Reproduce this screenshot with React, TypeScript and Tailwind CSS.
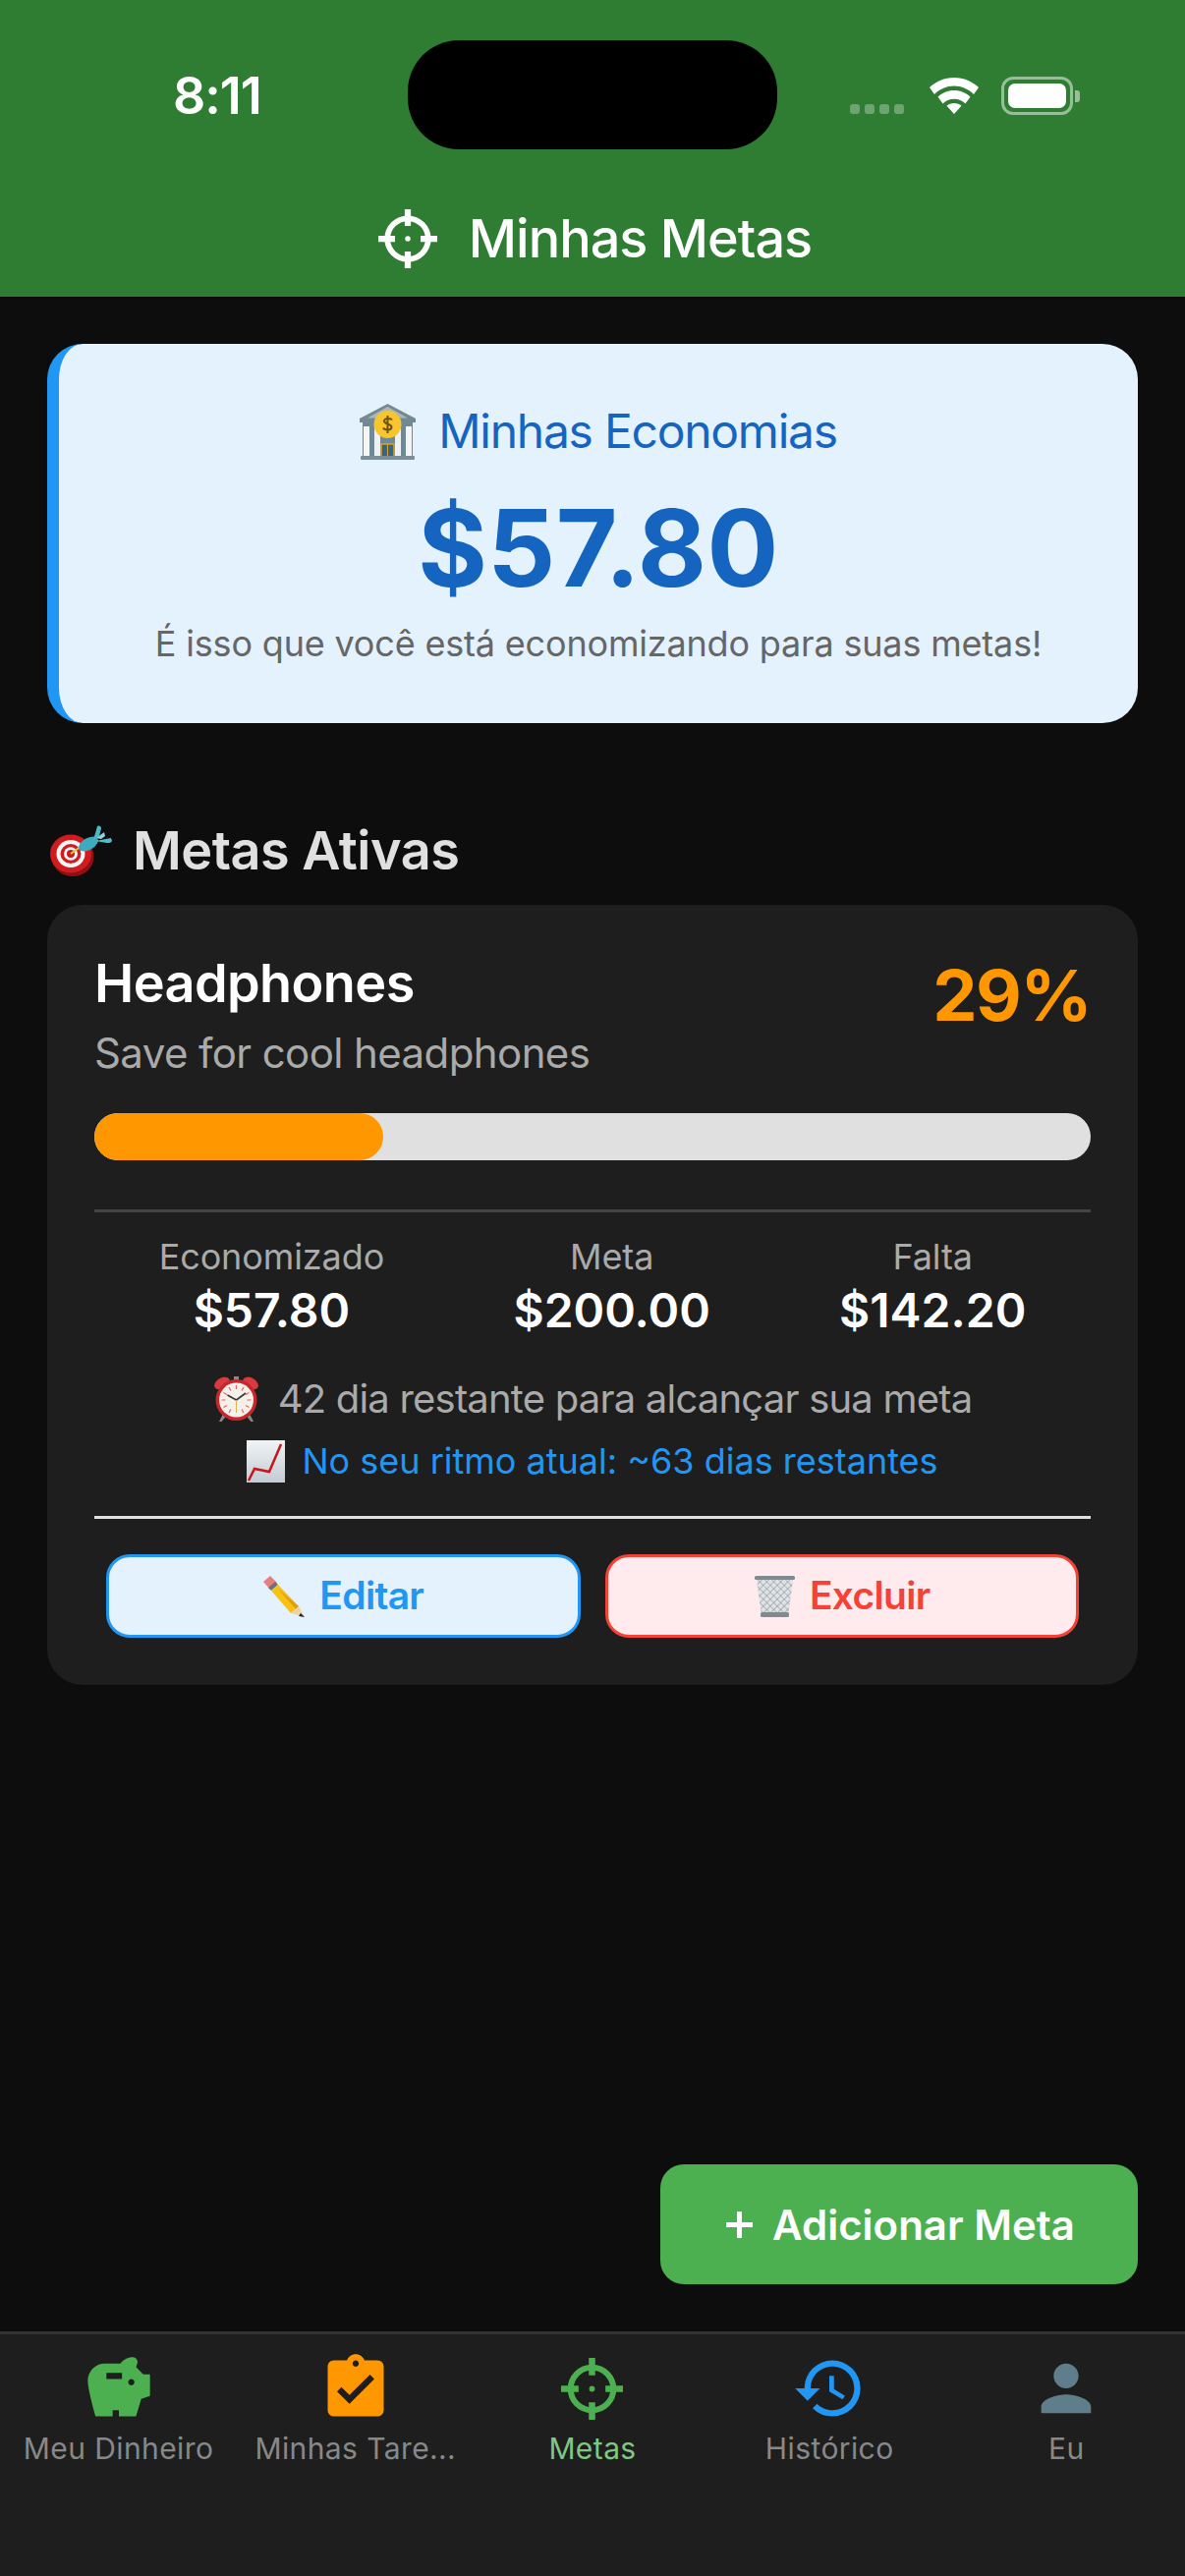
import { MdAssignmentTurnedIn, MdHistory, MdPerson, MdSavings } from "react-icons/md";

const font = { fontFamily: "Inter, 'Noto Sans', sans-serif" };

function Crosshair({ size, color }: { size: number; color: string }) {
  return (
    <svg viewBox="0 0 24 24" width={size} height={size} fill="none" stroke={color}>
      <circle cx="12" cy="12" r="8.3" strokeWidth="2.3" />
      <path d="M12 0v6.800M12 17.200V24M0 12h6.800M17.200 12H24" strokeWidth="2.5" />
      <circle cx="12" cy="12" r="1.100" fill={color} stroke="none" />
    </svg>
  );
}

function BankEmoji({ className }: { className?: string }) {
  return (
    <svg viewBox="0 0 57 57" className={className}>
      <path d="M28.500 0 57 15v4H0v-4z" fill="#76898f" />
      <path d="M28.500 3 49 14.500H8z" fill="#a9b8bd" />
      <rect x="3" y="19" width="51" height="34" fill="#6f8a94" />
      <rect x="4" y="23" width="6" height="30" fill="#f4f5f5" />
      <rect x="15" y="23" width="6" height="30" fill="#eef0f1" />
      <rect x="36" y="23" width="6" height="30" fill="#eef0f1" />
      <rect x="47" y="23" width="6" height="30" fill="#f4f5f5" />
      <rect x="22" y="41" width="13" height="13" fill="#37648a" stroke="#d9a520" strokeWidth="1.500" />
      <path d="M28.500 41v13" stroke="#d9a520" strokeWidth="1" />
      <rect x="1" y="53" width="55" height="4" rx="1" fill="#7d8f96" />
      <circle cx="28.500" cy="21" r="14" fill="#f8c62c" />
      <path d="M33 16.500c-1-1.500-7-2.500-8 .8s8 3 7.500 6.700-7.500 2.500-8.500.5M28.500 12v18" fill="none" stroke="#6f5316" strokeWidth="2" />
    </svg>
  );
}

function DartEmoji({ className }: { className?: string }) {
  return (
    <svg viewBox="0 0 63 53" className={className}>
      <ellipse cx="23" cy="33" rx="21.500" ry="20" fill="#8d1113" />
      <ellipse cx="21" cy="30" rx="21" ry="19.500" fill="#d01c1f" />
      <ellipse cx="21" cy="30" rx="14.500" ry="14" fill="#f5f5f5" />
      <ellipse cx="21" cy="30" rx="10.500" ry="10" fill="#d01c1f" />
      <ellipse cx="21" cy="30" rx="7" ry="6.700" fill="#f5f5f5" />
      <ellipse cx="21" cy="30" rx="4" ry="4" fill="#c81b1e" />
      <path d="m21 30 11-8" stroke="#e8c23a" strokeWidth="2" />
      <ellipse cx="39" cy="20" rx="11" ry="6" fill="#3fa9bd" transform="rotate(-30 39 20)" />
      <path d="M44 16 48 2c2-1 4 0 4 2l-2 8z" fill="#4eb7c8" />
      <path d="m47 14 8-6 1 4-4 3z" fill="#8fd3dc" />
      <path d="m46 17 16-3 1 3c-1 2-3 2-5 2z" fill="#52bccb" />
    </svg>
  );
}

function AlarmEmoji({ className }: { className?: string }) {
  return (
    <svg viewBox="0 0 47 47" className={className}>
      <path d="m10 38-4 8h2.500l5-6zM37 38l4 8h-2.500l-5-6z" fill="#8a8a8a" />
      <rect x="21" y="0" width="5" height="4" fill="#8a8a8a" />
      <ellipse cx="9" cy="7" rx="8.500" ry="5.500" fill="#d83a3f" transform="rotate(-30 9 7)" />
      <ellipse cx="38" cy="7" rx="8.500" ry="5.500" fill="#d83a3f" transform="rotate(30 38 7)" />
      <circle cx="23.500" cy="24" r="21" fill="#c5272d" />
      <circle cx="23.500" cy="24" r="17.500" fill="#f5f1ea" />
      <path d="M23.500 9v4M31 11l-2 3.500M36.500 16.500 33 18.500M38.500 24h-4M36.500 31.500 33 29.500M31 37l-2-3.500M16 11l2 3.500M10.500 16.500l3.500 2M8.500 24h4M10.500 31.500l3.500-2M16 37l2-3.500" stroke="#e0646a" strokeWidth="1.200" />
      <path d="M23.500 24 14.500 19M23.500 24 33 17" stroke="#3a3a3a" strokeWidth="1.700" />
      <path d="M23.500 24v13" stroke="#d9b44a" strokeWidth="1" />
    </svg>
  );
}

function ChartEmoji({ className }: { className?: string }) {
  return (
    <svg viewBox="0 0 39 43" className={className}>
      <defs>
        <linearGradient id="chart-bg" x1="0" y1="0" x2="0" y2="1">
          <stop offset="0" stopColor="#f1f4f6" />
          <stop offset="1" stopColor="#c3ccd3" />
        </linearGradient>
      </defs>
      <rect width="39" height="43" fill="url(#chart-bg)" />
      <path d="m2 41 6-12 15 3L35 4" fill="none" stroke="#c4161c" strokeWidth="2.500" />
    </svg>
  );
}

function PencilEmoji({ className }: { className?: string }) {
  return (
    <svg viewBox="0 0 44 43" className={className}>
      <path d="M1 7 8 1l7 7-7 7z" fill="#e77f82" />
      <path d="m6 13 7-6 3 3-7 6z" fill="#6f7479" />
      <path d="m9 16 7-6 21 22-8 7z" fill="#f7c313" />
      <path d="m16 14 21 18-3 3z" fill="#e39d0c" />
      <path d="m29 39 8-7 6 11z" fill="#ecd3a4" />
      <path d="m39 39 4 4-6-1z" fill="#222" />
    </svg>
  );
}

function TrashEmoji({ className }: { className?: string }) {
  return (
    <svg viewBox="0 0 43 43" className={className}>
      <defs>
        <pattern id="trash-mesh" width="5" height="5" patternUnits="userSpaceOnUse" patternTransform="rotate(45)">
          <path d="M0 0h5v5" fill="none" stroke="#838d93" strokeWidth="1.100" />
        </pattern>
      </defs>
      <path d="M3 5h37l-5 37H8z" fill="#dfe3e5" />
      <path d="M3 5h37l-5 37H8z" fill="url(#trash-mesh)" />
      <rect x="1" y="1" width="41" height="4" rx="1.500" fill="#7f8a90" />
      <rect x="7" y="38" width="29" height="5" rx="1.500" fill="#7f8b91" />
    </svg>
  );
}

function Stat({ label, value }: { label: string; value: string }) {
  return (
    <div className="flex flex-col items-center">
      <span className="text-[36px] leading-[50px] tracking-[-0.1px] text-[#aaaaaa]">{label}</span>
      <span className="text-[48px] leading-[60px] font-semibold text-white">{value}</span>
    </div>
  );
}

const tabs = [
  { label: "Meu Dinheiro", icon: <MdSavings size={76} color="#4caf50" />, text: "text-[#888888]" },
  { label: "Minhas Tare...", icon: <MdAssignmentTurnedIn size={76} color="#ff9800" />, text: "text-[#888888]" },
  { label: "Metas", icon: <Crosshair size={63} color="#4caf50" />, text: "text-[#81c784]" },
  { label: "Histórico", icon: <MdHistory size={76} color="#2196f3" />, text: "text-[#888888]" },
  { label: "Eu", icon: <MdPerson size={76} color="#607d8b" />, text: "text-[#888888]" },
];

export default function App() {
  return (
    <div className="flex h-[2622px] w-[1206px] flex-col overflow-hidden bg-[#0d0d0d]" style={font}>
      <header className="h-[302px] bg-[#2e7d32] text-white">
        <div className="grid grid-cols-[415px_376px_1fr] pt-[41px]">
          <div className="pt-[31px] pl-[176px] text-[52px] leading-[52px] font-semibold tracking-[-1px]">8:11</div>
          <div className="h-[111px] rounded-[52px] bg-black" />
          <div className="flex items-start pt-[38px] pl-[74px]">
            <div className="mt-[27px] flex gap-[5px]">
              <span className="h-[10px] w-[10px] rounded-[3px] bg-white/30" />
              <span className="h-[10px] w-[10px] rounded-[3px] bg-white/30" />
              <span className="h-[10px] w-[10px] rounded-[3px] bg-white/30" />
              <span className="h-[10px] w-[10px] rounded-[3px] bg-white/30" />
            </div>
            <svg viewBox="0 0 50 37" className="ml-[26px] h-[37px] w-[50px]" fill="#fff">
              <path d="M25 0c10 0 18.500 4 25 10l-5 7C39.500 11.500 32.500 8.500 25 8.500S10.500 11.500 5 17l-5-7C6.500 4 15 0 25 0z" />
              <path d="M25 13c6.500 0 12 2.500 16.500 6.500l-5 7c-3-3-7-4.800-11.500-4.800s-8.500 1.800-11.500 4.800l-5-7C13 15.500 18.500 13 25 13z" />
              <path d="M25 26c3 0 5.500 1 7.500 2.800L25 37l-7.500-8.200C19.500 27 22 26 25 26z" />
            </svg>
            <div className="mt-[-1px] ml-[23px] flex items-center">
              <div className="flex h-[39px] w-[73px] items-stretch rounded-[12px] border-[3px] border-white/50 p-[4px]">
                <div className="w-full rounded-[7px] bg-white" />
              </div>
              <div className="ml-[2px] h-[12px] w-[5px] rounded-r-[3px] bg-white/50" />
            </div>
          </div>
        </div>
        <div className="mt-[61px] flex items-center justify-center gap-[32px] pl-[5px]">
          <Crosshair size={60} color="#fff" />
          <h1 className="text-[54px] leading-[60px] font-medium tracking-[-1px]">Minhas Metas</h1>
        </div>
      </header>

      <main className="flex flex-1 flex-col px-[48px] pt-[48px] pb-[48px]">
        <section className="flex h-[386px] flex-col items-center rounded-[36px] border-l-[12px] border-[#2196f3] bg-[#e3f2fd] pt-[60px]">
          <div className="flex items-center gap-[23px] text-[#1565c0]">
            <BankEmoji className="h-[57px] w-[57px]" />
            <span className="text-[48px] leading-[58px] tracking-[-1.25px]">Minhas Economias</span>
          </div>
          <div className="mt-[25px] text-[108px] leading-[130px] font-bold tracking-[0.4px] text-[#1565c0]">$57.80</div>
          <p className="mt-[7px] text-[36px] leading-[50px] tracking-[-0.18px] text-[#666666]">É isso que você está economizando para suas metas!</p>
        </section>

        <h2 className="mt-[99px] flex h-[60px] items-center gap-[21px] pl-[3px] text-[54px] font-semibold tracking-[-0.5px] text-[#e0e0e0]">
          <DartEmoji className="h-[53px] w-[63px]" />
          Metas Ativas
        </h2>

        <section className="mt-[26px] h-[794px] rounded-[36px] bg-[#1e1e1e] px-[48px] pt-[48px]">
          <div className="flex items-start justify-between">
            <div>
              <div className="text-[54px] leading-[64px] font-semibold tracking-[-0.6px] text-white">Headphones</div>
              <div className="mt-[14px] text-[42px] leading-[50px] tracking-[-0.6px] text-[#aaaaaa]">Save for cool headphones</div>
            </div>
            <div className="text-[72px] leading-[88px] font-bold tracking-[-1.5px] text-[#ff9800]">29%</div>
          </div>
          <div className="mt-[36px] h-[48px] overflow-hidden rounded-full bg-[#e0e0e0]">
            <div className="h-full rounded-full bg-[#ff9800]" style={{ width: "29%" }} />
          </div>
          <div className="mt-[50px] flex justify-around border-t-[3px] border-[#444444] pt-[20px]">
            <Stat label="Economizado" value="$57.80" />
            <Stat label="Meta" value="$200.00" />
            <Stat label="Falta" value="$142.20" />
          </div>
          <div className="mt-[35px] flex items-center justify-center gap-[19px] text-[40px] leading-[50px] tracking-[-0.8px] text-[#aaaaaa]">
            <AlarmEmoji className="h-[47px] w-[47px]" />
            42 dia restante para alcançar sua meta
          </div>
          <div className="mt-[15px] flex items-center justify-center gap-[17px] text-[36px] leading-[46px] text-[#2196f3]">
            <ChartEmoji className="h-[43px] w-[39px]" />
            No seu ritmo atual: ~63 dias restantes
          </div>
          <div className="mt-[33px] grid grid-cols-2 gap-[25px] border-t-[3px] border-[#e0e0e0] px-[12px] pt-[36px]">
            <button className="flex h-[85px] items-center justify-center gap-[14px] rounded-[24px] border-[3px] border-[#2196f3] bg-[#e3f2fd] text-[39px] font-semibold tracking-[-0.7px] text-[#2196f3]">
              <PencilEmoji className="h-[43px] w-[44px]" />
              Editar
            </button>
            <button className="flex h-[85px] items-center justify-center gap-[14px] rounded-[24px] border-[3px] border-[#f44336] bg-[#ffebee] text-[39px] font-semibold tracking-[-0.7px] text-[#f44336]">
              <TrashEmoji className="h-[43px] w-[43px]" />
              Excluir
            </button>
          </div>
        </section>

        <button className="mt-auto flex h-[122px] w-[486px] items-center justify-center gap-[20px] self-end rounded-[24px] bg-[#4caf50] pl-[3px] text-[42px] font-semibold text-white">
          <svg viewBox="0 0 27 27" className="h-[27px] w-[27px]" fill="none" stroke="#fff" strokeWidth="5">
            <path d="M13.500 0v27M0 13.500h27" />
          </svg>
          Adicionar Meta
        </button>
      </main>

      <nav className="grid h-[249px] grid-cols-5 border-t-[3px] border-[#333333] bg-[#1e1e1e] pt-[17px]">
        {tabs.map((t) => (
          <div key={t.label} className="flex flex-col items-center">
            <div className="flex h-[76px] items-center justify-center">{t.icon}</div>
            <span className={`mt-[5px] text-[30px] leading-[36px] tracking-[0.4px] ${t.text}`}>{t.label}</span>
          </div>
        ))}
      </nav>
    </div>
  );
}
